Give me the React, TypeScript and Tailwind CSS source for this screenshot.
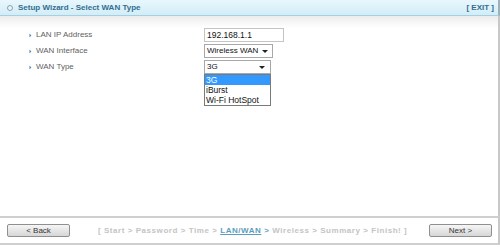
import { GoTriangleRight } from "react-icons/go"

const fields = ["LAN IP Address", "WAN Interface", "WAN Type"]

function Caret() {
	return (
		<svg width="6" height="3" viewBox="0 0 6 3" className="shrink-0">
			<path d="M0 0h6L3 3z" fill="#222" />
		</svg>
	)
}

function Select({ value, width }: { value: string; width: string }) {
	return (
		<div
			className={`${width} flex h-[14px] items-center justify-between gap-[4px] whitespace-nowrap border border-[#a8a8a8] bg-white pl-[2px] pr-[5px] text-[8px] leading-none text-[#111]`}
		>
			<span>{value}</span>
			<Caret />
		</div>
	)
}

function WizButton({ label }: { label: string }) {
	return (
		<button className="flex h-[13px] w-[63px] shrink-0 items-center justify-center whitespace-nowrap rounded-[2px] border border-[#8f8f8f] bg-gradient-to-b from-[#f6f6f6] to-[#d6d6d6] text-[8px] leading-none text-[#333]">
			{label}
		</button>
	)
}

export default function App() {
	return (
		<div className="flex h-[247px] w-[500px] flex-col bg-white font-['Liberation_Sans',Arial,sans-serif]">
			<div className="flex h-[16px] items-center justify-between border-b border-r-2 border-b-[#a6cfe0] border-r-[#9fb0b8] bg-gradient-to-b from-[#e8f7fc] to-[#d2edf8] pl-[7px] pr-[4px]">
				<div className="flex items-center gap-[5px]">
					<span className="h-[6px] w-[6px] rounded-full border border-[#8aa2ae] bg-[#eef4f6]" />
					<span className="whitespace-nowrap text-[8px] font-bold text-[#346d8e]">Setup Wizard - Select WAN Type</span>
				</div>
				<span className="whitespace-nowrap text-[8px] font-bold text-[#346d8e]">[ EXIT ]</span>
			</div>

			<div className="relative flex-1 border-r-2 border-r-[#c8c8c8] bg-gradient-to-b from-[#ececec] via-white via-[12px] to-white pl-[27px] pt-[11px]">
				<div className="flex flex-col">
					{fields.map((f, i) => (
						<div key={f} className="flex h-[16px] items-center">
							<div className="flex w-[177px] items-center gap-[2px] whitespace-nowrap text-[8px] text-[#5f5f5f]">
								<GoTriangleRight className="h-[7px] w-[7px] text-[#5a88a8]" />
								<span>{f}</span>
							</div>
							{i === 0 && (
								<div className="flex h-[14px] w-[80px] items-center border border-[#c4c4c4] bg-white pl-[2px] text-[8.5px] leading-none text-[#111]">
									192.168.1.1
								</div>
							)}
							{i === 1 && <Select value="Wireless WAN" width="w-[69px]" />}
							{i === 2 && <Select value="3G" width="w-[67px]" />}
						</div>
					))}
				</div>

				<div className="absolute left-[204px] top-[58px] flex w-[67px] flex-col whitespace-nowrap border border-[#7a7a7a] bg-white text-[8.5px] leading-[10px] text-[#111]">
					<span className="bg-[#3399ff] pl-[1px] text-white">3G</span>
					<span className="pl-[1px]">iBurst</span>
					<span className="pl-[1px]">Wi-Fi HotSpot</span>
				</div>
			</div>

			<div className="flex h-[29px] items-center border-y-2 border-r-2 border-[#cfcfcf] border-r-[#c8c8c8] pl-[7px] pr-[6px]">
				<WizButton label="< Back" />
				<div className="ml-[28px] flex-1 whitespace-nowrap text-[8px] font-bold tracking-[0.55px] text-[#c4c4c4]">
					[ Start &gt; Password &gt; Time &gt;{" "}
					<span className="text-[#5b9dc0] underline">LAN/WAN</span>{" "}
					<span className="text-[#6aa6c6]">&gt;</span> Wireless &gt; Summary &gt; Finish! ]
				</div>
				<WizButton label="Next >" />
			</div>
			<div className="h-[2px]" />
		</div>
	)
}
